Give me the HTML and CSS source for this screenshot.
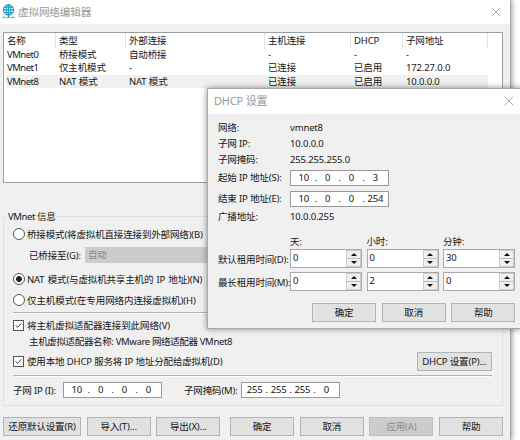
FILE: index.html
```html
<!DOCTYPE html>
<html lang="zh-CN">
<head>
    <meta charset="UTF-8">
    <meta name="viewport" content="width=device-width, initial-scale=1.0">
    <title>虚拟网络编辑器</title>
    <link rel="stylesheet" href="styles.css">
</head>
<body>
    <div class="window">
        <div class="titlebar">
            <svg class="globe" viewBox="0 0 12 14">
                <circle cx="6" cy="5.5" r="4.8"/>
                <ellipse cx="6" cy="5.5" rx="2.1" ry="4.8"/>
                <path d="M1.2 5.5h9.6M2 3h8M2 8h8M6 .7v11.5"/>
                <path class="base" d="M.5 12.4h3M4.5 12.4h3M8.5 12.4h3"/>
            </svg>
            <h1>虚拟网络编辑器</h1>
            <svg class="close" viewBox="0 0 10 10"><path d="M.7 .7l8.6 8.6M9.3 .7L.7 9.3"/></svg>
        </div>

        <div class="list">
            <div class="row head"><span>名称</span><span>类型</span><span>外部连接</span><span>主机连接</span><span>DHCP</span><span>子网地址</span></div>
            <div class="row"><span>VMnet0</span><span>桥接模式</span><span>自动桥接</span><span>-</span><span>-</span><span>-</span></div>
            <div class="row"><span>VMnet1</span><span>仅主机模式</span><span>-</span><span>已连接</span><span>已启用</span><span>172.27.0.0</span></div>
            <div class="row selected"><span>VMnet8</span><span>NAT 模式</span><span>NAT 模式</span><span>已连接</span><span>已启用</span><span>10.0.0.0</span></div>
        </div>

        <fieldset class="info">
            <legend>VMnet 信息</legend>
            <div class="option bridged"><i class="radio"></i><span>桥接模式(将虚拟机直接连接到外部网络)(B)</span></div>
            <div class="option bridge-to"><span>已桥接至(G):</span><div class="select">自动</div></div>
            <div class="option nat"><i class="radio on"></i><span>NAT 模式(与虚拟机共享主机的 IP 地址)(N)</span></div>
            <div class="option host"><i class="radio"></i><span>仅主机模式(在专用网络内连接虚拟机)(H)</span></div>
            <hr>
            <div class="option connect"><i class="check"><svg viewBox="0 0 11 11"><path d="M2 5.3l2.3 2.5L9 2.8"/></svg></i><span>将主机虚拟适配器连接到此网络(V)</span></div>
            <div class="option adapter"><span>主机虚拟适配器名称: VMware 网络适配器 VMnet8</span></div>
            <div class="option dhcp"><i class="check"><svg viewBox="0 0 11 11"><path d="M2 5.3l2.3 2.5L9 2.8"/></svg></i><span>使用本地 DHCP 服务将 IP 地址分配给虚拟机(D)</span><button class="settings">DHCP 设置(P)...</button></div>
            <hr>
            <div class="option subnet">
                <label>子网 IP (I):</label>
                <div class="ip"><b>10</b>.<b>0</b>.<b>0</b>.<b>0</b></div>
                <label class="mask">子网掩码(M):</label>
                <div class="ip"><b>255</b>.<b>255</b>.<b>255</b>.<b>0</b></div>
            </div>
        </fieldset>

        <div class="buttons">
            <button class="restore">还原默认设置(R)</button>
            <button>导入(T)...</button>
            <button>导出(X)...</button>
            <button class="ok">确定</button>
            <button>取消</button>
            <button disabled>应用(A)</button>
            <button>帮助</button>
        </div>
    </div>

    <div class="dialog">
        <div class="titlebar">
            <h1>DHCP 设置</h1>
            <svg class="close" viewBox="0 0 10 10"><path d="M.7 .7l8.6 8.6M9.3 .7L.7 9.3"/></svg>
        </div>
        <div class="fields">
            <span>网络:</span><span>vmnet8</span>
            <span>子网 IP:</span><span>10.0.0.0</span>
            <span>子网掩码:</span><span>255.255.255.0</span>
            <span>起始 IP 地址(S):</span><div class="ip"><b>10</b>.<b>0</b>.<b>0</b>.<b>3</b></div>
            <span>结束 IP 地址(E):</span><div class="ip"><b>10</b>.<b>0</b>.<b>0</b>.<b>254</b></div>
            <span>广播地址:</span><span>10.0.0.255</span>
        </div>
        <div class="lease">
            <span></span><span>天:</span><span>小时:</span><span>分钟:</span>
            <span>默认租用时间(D):</span>
            <div class="spin">0<i></i></div><div class="spin">0<i></i></div><div class="spin">30<i></i></div>
            <span>最长租用时间(M):</span>
            <div class="spin">0<i></i></div><div class="spin">2<i></i></div><div class="spin">0<i></i></div>
        </div>
        <div class="buttons">
            <button>确定</button>
            <button>取消</button>
            <button>帮助</button>
        </div>
    </div>
</body>
</html>
```

FILE: styles.css
```css
* {box-sizing: border-box;}
body {margin: 0; width: 520px; height: 440px; overflow: hidden; position: relative; background: #ffffff; color: #151515; font: 9.5px/13px "Noto Sans", "Noto Sans CJK SC", sans-serif; letter-spacing: -0.15px; white-space: nowrap;}
.window {width: 511px; height: 440px; background: #f0f0f0; border-right: 1px solid #a8a8a8; box-shadow: 1px 0 5px rgba(0,0,0,0.4);}

.titlebar {display: flex; align-items: center; background: #ffffff; height: 24px; padding: 0 9px 1px 2px;}
.titlebar h1 {font-size: 10.6px; line-height: 16px; font-weight: normal; color: #999999; margin: 0;}
.globe {width: 13px; height: 15px; margin-right: 3px; fill: none; stroke: #1a9bc0; stroke-width: 1;}
.globe .base {stroke: #3bb8a8; stroke-width: 1.2;}
.close {width: 10px; height: 10px; margin-left: auto; fill: none; stroke: #a0a0a0; stroke-width: 0.9;}

.list {width: 500px; height: 151px; margin: 8px 0 0 3px; border: 1px solid #9a9fa6; background: #ffffff; padding-left: 2px;}
.row {display: grid; grid-template-columns: 50px 70px 139px 86px 52px 85px; width: 482px; height: 13.4px; line-height: 13.4px;}
.row span {padding-left: 3px;}
.row span:first-child {padding-left: 1px; letter-spacing: -0.5px;}
.row.head {height: 15px; line-height: 16px;}
.row.head span {letter-spacing: -0.15px; border-right: 1px solid #e2e2e2;}
.selected {background: #f0f0f0;}

.info {width: 500px; height: 196px; margin: 27px 0 0 3px; padding: 0 10px 0 9px; border: 1px solid #dfdfdf;}
.info legend {padding: 0 1px; margin-left: -6px; height: 13px; letter-spacing: -0.4px;}
.option {display: flex; align-items: center; height: 18px;}
.radio {width: 12px; height: 12px; border: 1px solid #555555; border-radius: 50%; background: #ffffff; margin-right: 2px;}
.radio.on {background: radial-gradient(circle, #222222 2.6px, #ffffff 3.2px);}
.check {width: 11px; height: 11px; border: 1px solid #555555; background: #ffffff; margin-right: 3px;}
.check svg {display: block; width: 9px; height: 9px; fill: none; stroke: #222222; stroke-width: 1.1;}
.bridged {margin-top: 2px;}
.bridge-to {padding-left: 16px; margin-top: 3px;}
.select {width: 300px; height: 16px; line-height: 16px; margin-left: 4px; padding-left: 3px; background: #cccccc; color: #888888;}
.nat {margin-top: 6px; word-spacing: 0.9px;}
.host {margin-top: 3px;}
.info hr {border: 0; border-top: 1px solid #b4b4b4; border-bottom: 1px solid #fcfcfc; margin: 3px 0 2px;}
.connect, .host {letter-spacing: -0.08px;}
.adapter {padding-left: 16px; height: 16px; margin-top: -1px; letter-spacing: -0.35px;}
.dhcp {margin-top: 3px;}
.dhcp + hr {margin-top: 5px;}
.settings {width: 75px; margin-left: auto;}
.subnet {margin-top: 4px;}
.subnet label {width: 50px;}
.subnet .mask {width: 57px; margin-left: 22px;}

.ip {display: flex; width: 99px; height: 16px; line-height: 14px; padding: 0 2px; border: 1px solid #999999; background: #ffffff;}
.ip b {flex: 1; font-weight: normal; text-align: center;}

button {width: 64px; height: 19px; padding: 0; border: 1px solid #b4b4b4; background: #e1e1e1; color: inherit; font: inherit; letter-spacing: inherit; white-space: nowrap;}
button:disabled {background: #cccccc; border-color: #bfbfbf; color: #8c8c8c;}
.buttons {display: flex; gap: 5.7px;}
.window .buttons {margin: 11px 0 0 3px;}
.restore {width: 78px;}
.ok {margin-left: 4px;}

.dialog {position: absolute; left: 207px; top: 88px; width: 316px; height: 241px; background: #f0f0f0; border: 1px solid #a8a8a8; box-shadow: 0 0 6px rgba(0,0,0,0.45);}
.dialog .titlebar {height: 25px; padding: 0 8px 1px 6px;}
.dialog h1 {font-size: 11px; letter-spacing: -0.2px;}
.fields {display: grid; grid-template-columns: 72px 99px; grid-template-rows: 16px 16px 16px 21px 21px 15px; align-items: center; margin: 5px 0 0 10px;}
.lease {display: grid; grid-template-columns: 67.5px repeat(3, 72px); grid-template-rows: 13px 23px 23px; column-gap: 4.5px; align-items: center; margin: 10px 0 0 10px;}
.lease > span {padding-top: 1px;}
.spin {display: flex; justify-content: space-between; height: 19px; line-height: 15px; padding-left: 2px; border: 1px solid #aaaaaa; background: #ffffff;}
.spin i {display: flex; flex-direction: column; justify-content: space-around; align-items: center; width: 15px; height: 17px; border: 1px solid #cccccc; background: linear-gradient(#f0f0f0 7px, #bbbbbb 7px, #bbbbbb 8px, #f0f0f0 8px);}
.spin i::before {content: ""; border: 3px solid transparent; border-top: 0; border-bottom: 3px solid #111111;}
.spin i::after {content: ""; border: 3px solid transparent; border-bottom: 0; border-top: 3px solid #111111;}
.dialog .buttons {margin: 10px 0 0 104px;}
```
